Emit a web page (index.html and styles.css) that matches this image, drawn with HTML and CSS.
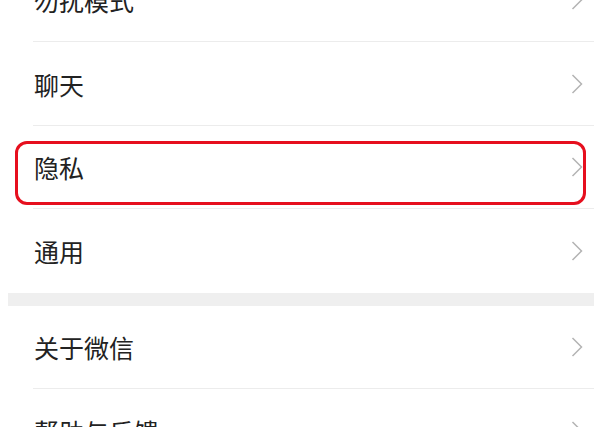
FILE: index.html
```html
<!DOCTYPE html>
<html lang="zh-CN">
<head>
<meta charset="utf-8">
<link rel="stylesheet" href="styles.css">
</head>
<body>
<div class="list">
  <div class="row divided"><span class="label">勿扰模式</span><svg class="chev" viewBox="0 0 12 20"><polyline points="1.5,1 10.5,10 1.5,19"/></svg></div>
  <div class="row divided"><span class="label">聊天</span><svg class="chev" viewBox="0 0 12 20"><polyline points="1.5,1 10.5,10 1.5,19"/></svg></div>
  <div class="row divided highlighted"><span class="label">隐私</span><svg class="chev" viewBox="0 0 12 20"><polyline points="1.5,1 10.5,10 1.5,19"/></svg><div class="mark"></div></div>
  <div class="row"><span class="label">通用</span><svg class="chev" viewBox="0 0 12 20"><polyline points="1.5,1 10.5,10 1.5,19"/></svg></div>
  <div class="band"></div>
  <div class="row divided"><span class="label">关于微信</span><svg class="chev" viewBox="0 0 12 20"><polyline points="1.5,1 10.5,10 1.5,19"/></svg></div>
  <div class="row"><span class="label">帮助与反馈</span><svg class="chev" viewBox="0 0 12 20"><polyline points="1.5,1 10.5,10 1.5,19"/></svg></div>
</div>
</body>
</html>
```
FILE: styles.css
```css
html, body {
  margin: 0;
  padding: 0;
  background: #ffffff;
  overflow: hidden;
}
body {
  width: 594px;
  height: 427px;
  font-family: "Noto Sans CJK SC", "Noto Sans", sans-serif;
}
.list {
  margin-top: -41.5px;
  display: flex;
  flex-direction: column;
}
.row {
  position: relative;
  box-sizing: border-box;
  height: 83.5px;
  flex: none;
  display: flex;
  align-items: center;
  justify-content: space-between;
  padding: 0 11px 0 34px;
}
.row.divided::after {
  content: "";
  position: absolute;
  left: 33px;
  right: 0;
  bottom: 0;
  height: 1px;
  background: #ececec;
}
.label {
  font-size: 25px;
  line-height: 30px;
  color: #222222;
}
.chev {
  width: 12px;
  height: 20px;
  fill: none;
  stroke: #b4b4b4;
  stroke-width: 1.5;
}
.band {
  height: 13px;
  flex: none;
  margin-left: 8px;
  background: #efefef;
}
.mark {
  position: absolute;
  top: 15.5px;
  left: 15px;
  right: 8px;
  bottom: 4px;
  border: 3px solid #e60f1e;
  border-radius: 12px;
}
```
